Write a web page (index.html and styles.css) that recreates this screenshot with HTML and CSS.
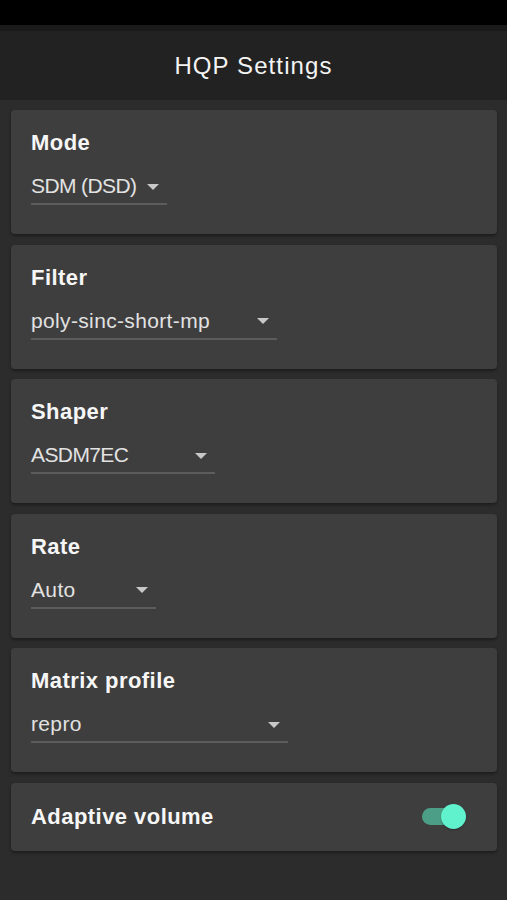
FILE: index.html
```html
<!DOCTYPE html>
<html>
<head>
<meta charset="utf-8">
<link rel="stylesheet" href="styles.css">
</head>
<body>
<div class="statusbar"></div>
<div class="strip"></div>
<header class="appbar"><h1 class="title">HQP Settings</h1></header>
<main class="list">
  <section class="card">
    <div class="label">Mode</div>
    <div class="select w-mode"><span class="value caps">SDM (DSD)</span><span class="arrow"></span></div>
  </section>
  <section class="card">
    <div class="label">Filter</div>
    <div class="select w-filter"><span class="value">poly-sinc-short-mp</span><span class="arrow"></span></div>
  </section>
  <section class="card">
    <div class="label">Shaper</div>
    <div class="select w-shaper"><span class="value caps">ASDM7EC</span><span class="arrow"></span></div>
  </section>
  <section class="card">
    <div class="label">Rate</div>
    <div class="select w-rate"><span class="value">Auto</span><span class="arrow"></span></div>
  </section>
  <section class="card">
    <div class="label">Matrix profile</div>
    <div class="select w-matrix"><span class="value">repro</span><span class="arrow"></span></div>
  </section>
  <section class="card card-row">
    <div class="label">Adaptive volume</div>
    <div class="switch"><span class="track"></span><span class="thumb"></span></div>
  </section>
</main>
</body>
</html>
```
FILE: styles.css
```css
* { box-sizing: border-box; }
html, body { margin: 0; padding: 0; }
body {
  background: #2c2c2c;
  font-family: "Liberation Sans", Arial, sans-serif;
  width: 507px;
  height: 900px;
  overflow: hidden;
}
.statusbar { height: 25px; background: #000; }
.strip { height: 6px; background: #1a1a1a; }
.appbar {
  height: 69px;
  background: #222222;
  display: flex;
  align-items: center;
  justify-content: center;
}
.title {
  margin: 0;
  font-weight: normal;
  font-size: 24px;
  letter-spacing: 1.1px;
  color: #f4f4f4;
  padding-top: 1px;
}
.list {
  padding: 10px 10px 0 11px;
  display: flex;
  flex-direction: column;
  gap: 10.5px;
}
.card {
  background: #3e3e3e;
  border-radius: 4px;
  height: 124px;
  padding: 20px 20px 0 20px;
  box-shadow: 0 2px 3px rgba(0,0,0,0.35);
}
.label {
  font-weight: bold;
  font-size: 22px;
  line-height: 26px;
  letter-spacing: 0.45px;
  color: #f6f6f6;
}
.select {
  margin-top: 18px;
  display: flex;
  align-items: center;
  justify-content: space-between;
  padding-bottom: 5px;
  border-bottom: 2px solid #5c5c5c;
  height: 31px;
}
.value {
  font-size: 21px;
  line-height: 24px;
  letter-spacing: 0.35px;
  color: #e2e2e2;
}
.value.caps { letter-spacing: -0.6px; }
.arrow {
  width: 0; height: 0;
  border-left: 6px solid transparent;
  border-right: 6px solid transparent;
  border-top: 6px solid #c8c8c8;
  margin-right: 8px;
  margin-top: 1px;
}
.w-mode { width: 136px; }
.w-filter { width: 246px; }
.w-shaper { width: 184px; }
.w-rate { width: 125px; }
.w-matrix { width: 257px; }
.card-row {
  height: 68px;
  padding: 0 31px 0 20px;
  display: flex;
  align-items: center;
  justify-content: space-between;
}
.switch { position: relative; width: 44px; height: 25px; }
.track {
  position: absolute; left: 0; top: 4px;
  width: 36px; height: 17px;
  border-radius: 9px;
  background: #4c9f86;
}
.thumb {
  position: absolute; right: 0; top: 0;
  width: 25px; height: 25px;
  border-radius: 50%;
  background: #60f2cc;
  box-shadow: 0 1px 2px rgba(0,0,0,0.3);
}
```
